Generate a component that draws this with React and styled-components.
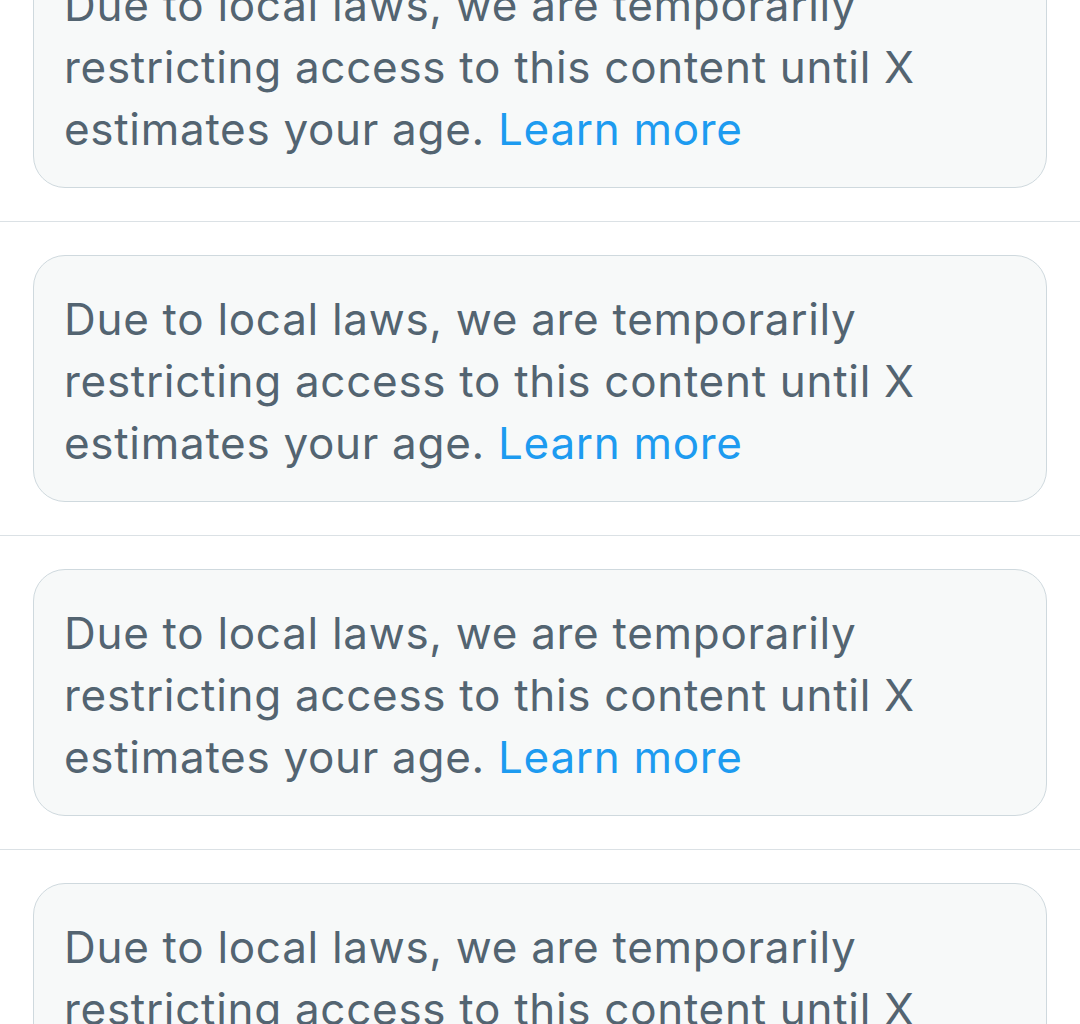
import React from 'react';
import styled, { createGlobalStyle } from 'styled-components';

const GlobalStyle = createGlobalStyle`
	body {
		margin: 0;
		background: #fff;
		font-family: Inter, "Noto Sans", "Liberation Sans", sans-serif;
	}
`;

const Feed = styled.div`
	margin-top: -92px;
	overflow: hidden;
`;

const FeedItem = styled.div`
	padding: 33px 33px;
	border-bottom: 1px solid #dbe1e5;
`;

const Notice = styled.div`
	background: #f7f9f9;
	border: 1px solid #cfd9de;
	border-radius: 32px;
	padding: 32px 30px 27px;
	color: #536471;
	font-size: 44px;
	line-height: 62px;
	letter-spacing: 0.7px;
`;

const LearnMore = styled.a`
	color: #1d9bf0;
	text-decoration: none;
`;

const App = () => (
	<>
		<GlobalStyle />
		<Feed>
			{[0, 1, 2, 3].map(i => (
				<FeedItem key={i}>
					<Notice>
						Due to local laws, we are temporarily restricting access to this content until X estimates your age.{' '}
						<LearnMore href="#">Learn more</LearnMore>
					</Notice>
				</FeedItem>
			))}
		</Feed>
	</>
);

export default App;
